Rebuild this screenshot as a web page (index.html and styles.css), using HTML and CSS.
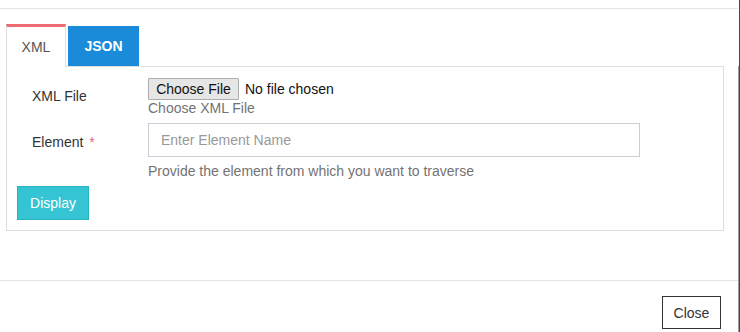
FILE: index.html
```html
<!DOCTYPE html>
<html>
<head>
<meta charset="utf-8">
<link rel="stylesheet" href="styles.css">
</head>
<body>
<div class="page">
  <div class="modal-header"></div>
  <div class="modal-body">
    <div class="tabs">
      <div class="tab tab-active">XML</div>
      <div class="tab tab-json">JSON</div>
    </div>
    <div class="panel">
      <div class="row row-file">
        <div class="label">XML File</div>
        <div class="control">
          <div class="file-input">
            <span class="file-btn">Choose File</span>
            <span class="file-name">No file chosen</span>
          </div>
          <div class="help help-file">Choose XML File</div>
        </div>
      </div>
      <div class="row row-element">
        <div class="label label-element">Element <span class="req">*</span></div>
        <div class="control">
          <input class="text-input" type="text" placeholder="Enter Element Name">
          <div class="help help-element">Provide the element from which you want to traverse</div>
        </div>
      </div>
      <button class="btn-display">Display</button>
    </div>
  </div>
  <div class="modal-footer">
    <button class="btn-close">Close</button>
  </div>
  <div class="scroll-thumb"></div>
</div>
</body>
</html>
```

FILE: styles.css
```css
html, body {
  margin: 0;
  padding: 0;
  background: #ffffff;
}
body {
  font-family: "Liberation Sans", Arial, sans-serif;
  font-size: 14px;
  color: #333333;
}
.page {
  position: relative;
  width: 739px;
  height: 332px;
  border-right: 1px solid #4a4a4a;
  overflow: hidden;
}
.scroll-thumb {
  position: absolute;
  right: 0;
  top: 66px;
  bottom: 0;
  width: 1px;
  background: #9a9a9a;
}
.modal-header {
  height: 8px;
  width: 738px;
  border-bottom: 1px solid #e5e5e5;
}
.modal-body {
  width: 738px;
  box-sizing: border-box;
  padding: 15px 14px 0 6px;
  height: 271px;
}
.tabs {
  display: flex;
  align-items: flex-end;
  gap: 2px;
  position: relative;
  z-index: 1;
}
.tab {
  box-sizing: border-box;
  display: flex;
  align-items: center;
  justify-content: center;
  line-height: 20px;
}
.tab-active {
  width: 60px;
  height: 43px;
  border: 1px solid #dddddd;
  border-top: 3px solid #f06b73;
  border-bottom: none;
  background: #ffffff;
  color: #555555;
  margin-bottom: -1px;
  padding-top: 0;
}
.tab-json {
  width: 71px;
  height: 40px;
  background: #198bd9;
  color: #ffffff;
  font-weight: bold;
}
.panel {
  border: 1px solid #dddddd;
  padding: 11px 10px 10px 10px;
}
.row {
  display: grid;
  grid-template-columns: 131px 1fr;
}
.label {
  padding-left: 15px;
  line-height: 20px;
  color: #333333;
}
.row-file .label {
  padding-top: 8px;
}
.label-element {
  padding-top: 9px;
}
.req {
  color: #e3657f;
  margin-left: 2px;
}
.file-input {
  display: flex;
  align-items: center;
  height: 22px;
}
.file-btn {
  box-sizing: border-box;
  height: 22px;
  width: 91px;
  border: 1px solid #adadad;
  background: #e6e6e6;
  color: #111111;
  line-height: 20px;
  text-align: center;
  border-radius: 1px;
}
.file-name {
  margin-left: 6px;
  color: #111111;
}
.help {
  color: #737373;
  line-height: 16px;
}
.help-file {
  margin-top: 0;
}
.row-file {
  margin-bottom: 7px;
}
.text-input {
  display: block;
  box-sizing: border-box;
  width: 492px;
  height: 34px;
  border: 1px solid #c9ced6;
  padding: 0 12px;
  font-family: "Liberation Sans", Arial, sans-serif;
  font-size: 14px;
  color: #555555;
  margin: 0;
  outline: none;
}
.text-input::placeholder {
  color: #999999;
}
.help-element {
  margin-top: 6px;
}
.row-element {
  margin-bottom: 7px;
}
.btn-display {
  display: block;
  box-sizing: border-box;
  width: 72px;
  height: 34px;
  background: #35c4d3;
  border: 1px solid #29b3c2;
  color: #ffffff;
  font-family: "Liberation Sans", Arial, sans-serif;
  font-size: 14px;
  padding: 0;
  margin: 0;
}
.modal-footer {
  width: 738px;
  box-sizing: border-box;
  border-top: 1px solid #e5e5e5;
  padding: 15px 17px 0 0;
  display: flex;
  justify-content: flex-end;
}
.btn-close {
  box-sizing: border-box;
  width: 59px;
  height: 33px;
  background: #ffffff;
  border: 1px solid #333333;
  color: #333333;
  font-family: "Liberation Sans", Arial, sans-serif;
  font-size: 14px;
  padding: 0;
  margin: 0;
}
```
